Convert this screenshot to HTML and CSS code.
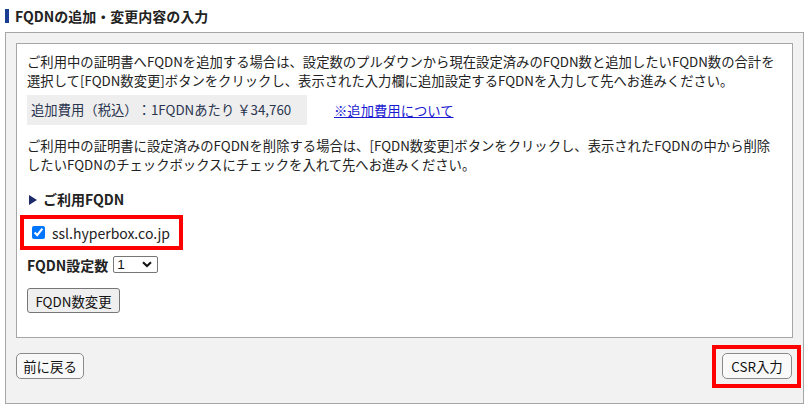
FILE: index.html
```html
<!DOCTYPE html>
<html lang="ja">
<head>
<meta charset="utf-8">
<title>FQDNの追加・変更内容の入力</title>
<link rel="stylesheet" href="styles.css">
</head>
<body>
<h1 class="title">FQDNの追加・変更内容の入力</h1>
<div class="panel">
  <div class="content">
    <p class="lead">ご利用中の証明書へFQDNを追加する場合は、設定数のプルダウンから現在設定済みのFQDN数と追加したいFQDN数の合計を<br>選択して[FQDN数変更]ボタンをクリックし、表示された入力欄に追加設定するFQDNを入力して先へお進みください。</p>
    <div class="fee-row">
      <span class="fee">追加費用（税込）：1FQDNあたり ￥34,760</span>
      <a href="#" class="fee-link">※追加費用について</a>
    </div>
    <p class="lead lead-2">ご利用中の証明書に設定済みのFQDNを削除する場合は、[FQDN数変更]ボタンをクリックし、表示されたFQDNの中から削除<br>したいFQDNのチェックボックスにチェックを入れて先へお進みください。</p>
    <h2 class="sub"><svg class="tri" width="8" height="10" viewBox="0 0 8 10"><path d="M0 0 L8 5 L0 10 Z" fill="#1d2b6b"/></svg>ご利用FQDN</h2>
    <label class="fqdn-item"><input type="checkbox" checked><span>ssl.hyperbox.co.jp</span></label>
    <div class="count-row">
      <span class="count-label">FQDN設定数</span>
      <span class="select-wrap">
        <select class="count-select"><option>1</option><option>2</option><option>3</option></select>
        <svg class="chev" width="10" height="7" viewBox="0 0 10 7"><path d="M1 1.2 L5 5 L9 1.2" fill="none" stroke="#111" stroke-width="2"/></svg>
      </span>
    </div>
    <button class="btn btn-square" type="button">FQDN数変更</button>
  </div>
  <div class="actions">
    <button class="btn btn-round" type="button">前に戻る</button>
    <span class="mark"><button class="btn btn-round btn-csr" type="button">CSR入力</button></span>
  </div>
</div>
</body>
</html>
```
FILE: styles.css
```css
html, body {
  margin: 0;
  padding: 0;
  background: #ffffff;
}
body {
  padding-top: 9px;
  font-family: "Noto Sans CJK JP", "Liberation Sans", sans-serif;
  font-size: 13.33px;
  color: #222222;
  text-spacing-trim: space-all;
}
.title {
  margin: 0 0 0 5px;
  border-left: 4px solid #1b3c95;
  padding-left: 6px;
  font-size: 14px;
  font-weight: bold;
  line-height: 14px;
  color: #222222;
}
.panel {
  margin: 9px 5px 0 5px;
  background: #f2f2f2;
  border: 1px solid #a6a6a6;
  padding: 10px 10px 24px 10px;
}
.content {
  background: #ffffff;
  border: 1px solid #a6a6a6;
  padding: 8px 10px 24px 10px;
}
.lead {
  margin: 0;
  line-height: 19px;
  font-size: 13.33px;
  white-space: nowrap;
}
.fee-row {
  margin-top: 5px;
  display: flex;
  align-items: center;
}
.fee {
  display: inline-block;
  width: 266px;
  background: #eeeeee;
  padding: 5px 10px 5px 4px;
  line-height: 20px;
  font-size: 13.33px;
  color: #2a3550;
}
.fee-link {
  margin-left: 27px;
  color: #1a1ad2;
  font-size: 13.33px;
  text-decoration: underline;
}
.lead-2 {
  margin-top: 11px;
}
.sub {
  margin: 16px 0 0 0;
  font-size: 14px;
  font-weight: bold;
  line-height: 19px;
  display: flex;
  align-items: center;
}
.tri {
  margin: 0 6px 0 2px;
}
.fqdn-item {
  margin: 14px 0 0 1px;
  display: flex;
  align-items: center;
  width: fit-content;
  height: 19px;
  padding-right: 5px;
  outline: 4px solid #ff0000;
  outline-offset: 4px;
  font-size: 14px;
}
.fqdn-item input {
  margin: 0 7px 0 4px;
  width: 13px;
  height: 13px;
}
.count-row {
  margin-top: 13px;
  display: flex;
  align-items: center;
  height: 19px;
}
.count-label {
  font-weight: bold;
  font-size: 14px;
  margin-right: 5px;
}
.select-wrap {
  position: relative;
  display: inline-block;
}
.count-select {
  -webkit-appearance: none;
  appearance: none;
  width: 45px;
  height: 17px;
  border: 1px solid #767676;
  border-radius: 2px;
  background: #ffffff;
  padding: 0 0 0 3px;
  font-family: "Liberation Sans", sans-serif;
  font-size: 13.5px;
  line-height: 15px;
  color: #111111;
  display: block;
}
.chev {
  position: absolute;
  right: 6px;
  top: 5px;
  pointer-events: none;
}
.btn {
  font-family: "Noto Sans CJK JP", "Liberation Sans", sans-serif;
  font-size: 13.4px;
  color: #111111;
  padding: 0;
  cursor: pointer;
}
.btn-square {
  margin-top: 14px;
  width: 93px;
  height: 25px;
  background: #efefef;
  border: 1px solid #767676;
  border-radius: 3px;
}
.actions {
  margin-top: 15px;
  display: flex;
  justify-content: space-between;
  align-items: center;
  height: 26px;
}
.btn-round {
  height: 26px;
  width: 68px;
  background: #f9f9f9;
  border: 1px solid #8a8a8a;
  border-radius: 5px;
}
.mark {
  display: flex;
  border: 4px solid #ff0000;
  padding: 4px 5px 5px 6px;
  margin: -9px -8px -9px 0;
}
.btn-csr {
  width: 70px;
}
```
